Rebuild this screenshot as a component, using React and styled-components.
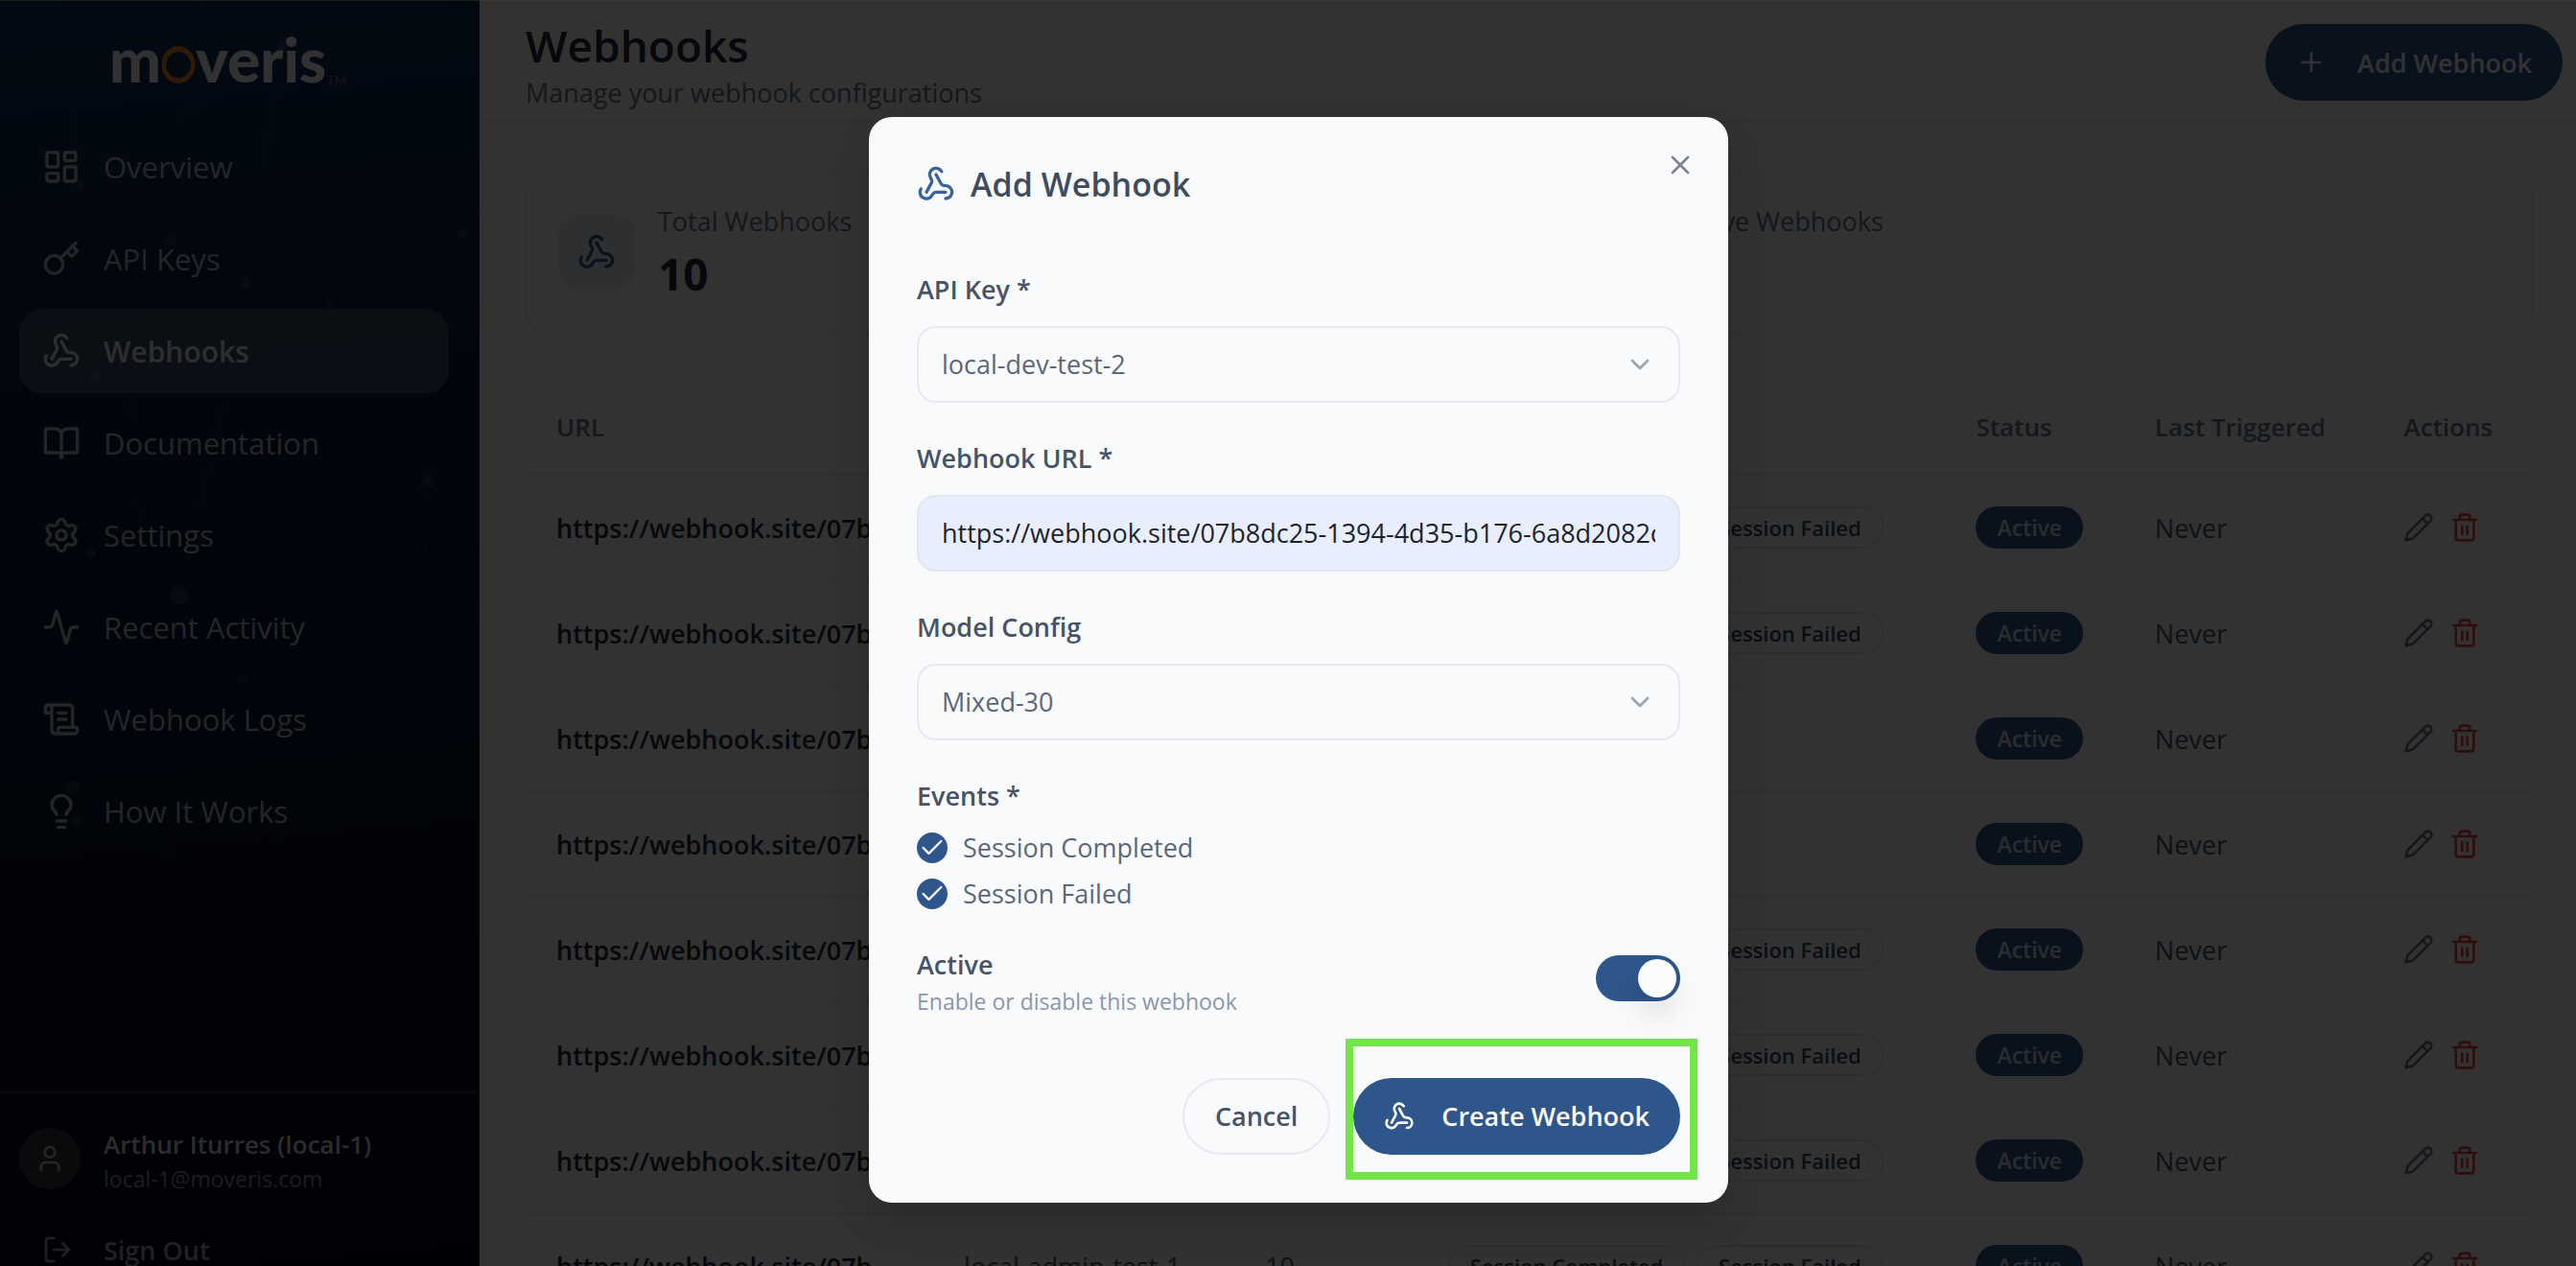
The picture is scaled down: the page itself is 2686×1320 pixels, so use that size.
import React, { useState } from 'react';
import styled, { createGlobalStyle } from "styled-components";
import {
    LayoutDashboard, Key, Webhook, BookOpen, Settings, Activity, ScrollText,
    Lightbulb, User, LogOut, Plus, Pencil, Trash2, X, ChevronDown, Check
} from "lucide-react";

const GlobalStyle = createGlobalStyle`
    * { box-sizing: border-box; }
    html, body {
        margin: 0;
        height: 100%;
        overflow: hidden;
        background: #fafafa;
    }
    body, button, input, select {
        font-family: "Open Sans", "Noto Sans", sans-serif;
        font-size: 27px;
    }
    h1, h2, p { margin: 0; }
`

const Page = styled.div`
    position: relative;
    display: flex;
    height: calc(100vh + 54px);
    background: #fafafa;
`

/* ---------- sidebar ---------- */

const Sidebar = styled.aside`
    position: relative;
    width: 500px;
    flex-shrink: 0;
    display: flex;
    flex-direction: column;
    background: linear-gradient(175deg, #0f325c 0%, #0a1c40 30%, #081734 55%, #050c1e 78%, #030818 100%);
`

const Network = styled.svg`
    position: absolute;
    inset: 0;
    width: 100%;
    height: 100%;
`

const Logo = styled.div`
    position: relative;
    height: 130px;
    flex-shrink: 0;
    padding: 0 0 6px 114px;
    display: flex;
    align-items: center;
    font-family: Lato, sans-serif;
    font-weight: 900;
    font-size: 64px;
    line-height: 72px;
    color: #f4f4f4;
`

const LogoRing = styled.svg`
    width: 36px;
    height: 42px;
    margin-top: 12px;
`

const Trademark = styled.small`
    align-self: flex-end;
    margin-bottom: 32px;
    font-weight: 400;
    font-size: 14px;
    line-height: 16px;
    color: #7a6656;
`

const Nav = styled.nav`
    position: relative;
    flex: 1;
    display: flex;
    flex-direction: column;
    gap: 8px;
    padding: 0 32px 0 20px;
`

const NavLink = styled.a`
    display: flex;
    align-items: center;
    gap: 24px;
    height: 88px;
    padding: 0 24px;
    border-radius: 24px;
    font-size: ${p => p.$active ? 30 : 31}px;
    text-decoration: none;
    font-weight: ${p => p.$active ? 600 : 400};
    color: ${p => p.$active ? "#e2e4e8" : "#b4b8c2"};
    background: ${p => p.$active ? "rgba(255, 250, 240, 0.2)" : "transparent"};
`

const SidebarFooter = styled.div`
    position: relative;
    padding: 29px 20px 31px;
    border-top: 2px solid #26282e;
`

const Profile = styled.div`
    display: flex;
    align-items: center;
    gap: 24px;
`

const Avatar = styled.div`
    display: flex;
    align-items: center;
    justify-content: center;
    width: 64px;
    height: 64px;
    border-radius: 50%;
    background: #30323a;
    color: #b4b8c2;
`

const ProfileText = styled.div`
    padding-top: 6px;
`

const ProfileName = styled.p`
    font-size: 26px;
    font-weight: 600;
    line-height: 36px;
    color: #d8dade;
`

const ProfileMail = styled.p`
    font-size: 23px;
    line-height: 36px;
    color: #8c909a;
`

const SignOut = styled.button`
    display: flex;
    align-items: center;
    gap: 32px;
    height: 80px;
    margin-top: 16px;
    padding: 0 24px;
    border: none;
    background: none;
    font-weight: 600;
    color: #a0a4ae;
`

/* ---------- main area ---------- */

const Main = styled.main`
    flex: 1;
    min-width: 0;
`

const Header = styled.header`
    display: flex;
    align-items: center;
    justify-content: space-between;
    height: 128px;
    padding: 4px 14px 0 48px;
    border-bottom: 2px solid #ebebeb;
`

const HeaderText = styled.div`
    padding-top: 4px;
`

const Title = styled.h1`
    font-size: 46px;
    line-height: 60px;
    font-weight: 600;
    color: #1f2937;
`

const Subtitle = styled.p`
    line-height: 40px;
    color: #64748b;
`

const Button = styled.button`
    display: flex;
    align-items: center;
    gap: 32px;
    height: 80px;
    padding: 0 32px;
    border: ${p => p.$outline ? "2px solid #e8e9ec" : "none"};
    border-radius: 40px;
    font-weight: 600;
    background: ${p => p.$outline ? "#f9fafc" : "#2f568a"};
    color: ${p => p.$outline ? "#475366" : "#f9fafc"};
`

const Content = styled.div`
    padding: 50px 44px 0 48px;
`

const Stats = styled.div`
    display: grid;
    grid-template-columns: 1fr 1fr;
    gap: 32px;
`

const StatCard = styled.section`
    display: flex;
    align-items: center;
    gap: 24px;
    height: 170px;
    padding: 32px;
    border: 2px solid #ebebeb;
    border-radius: 24px;
`

const StatIcon = styled.div`
    display: flex;
    align-items: center;
    justify-content: center;
    width: 80px;
    height: 80px;
    border-radius: 24px;
    background: #e4e9f0;
    color: #2f568a;
`

const StatLabel = styled.p`
    line-height: 36px;
    margin-bottom: 8px;
    color: #64748b;
`

const StatValue = styled.p`
    font-size: 46px;
    line-height: 56px;
    font-weight: 700;
    color: #1f2937;
`

const Table = styled.table`
    width: 100%;
    margin-top: 48px;
    table-layout: fixed;
    border-collapse: collapse;
    text-align: left;
`

const Col = styled.col`
    width: ${p => p.$share}%;
`

const Th = styled.th`
    height: 99px;
    padding: 0 0 0 32px;
    border-bottom: 2px solid #ebebeb;
    font-size: 26px;
    font-weight: 600;
    color: #64748b;
`

const Td = styled.td`
    height: 110px;
    padding: 0 0 0 32px;
    border-bottom: 2px solid #ebebeb;
    color: #475569;
    white-space: nowrap;
`

const UrlText = styled.div`
    width: 358px;
    overflow: hidden;
    text-overflow: ellipsis;
    font-weight: 600;
    color: #1f2937;
`

const Badges = styled.div`
    display: flex;
    gap: 12px;
`

const Badge = styled.span`
    display: inline-flex;
    align-items: center;
    height: 44px;
    padding: 0 ${p => p.$solid ? 20 : 21}px;
    border: 2px solid ${p => p.$solid ? "#2f568a" : "#e6e6e6"};
    border-radius: 22px;
    font-size: ${p => p.$solid ? 23 : 22}px;
    font-weight: 600;
    background: ${p => p.$solid ? "#2f568a" : "transparent"};
    color: ${p => p.$solid ? "#d8dce4" : "#334155"};
`

const RowActions = styled.div`
    display: flex;
    gap: 16px;
`

const IconButton = styled.button`
    display: flex;
    padding: 0;
    border: none;
    background: none;
    color: ${p => p.$danger ? "#ef4444" : "#64748b"};
`

/* ---------- dialog ---------- */

const Overlay = styled.div`
    position: absolute;
    inset: 0 -22px 0 0;
    display: flex;
    align-items: center;
    justify-content: center;
    background: rgba(0, 0, 0, 0.8);
    border-top: 1px solid rgba(90, 80, 50, 0.3);
`

const Dialog = styled.div`
    position: relative;
    width: 896px;
    padding: 50px;
    border-radius: 24px;
    background: #f9fafc;
    box-shadow: 0 20px 40px rgba(0, 0, 0, 0.15);
`

const DialogTitle = styled.h2`
    display: flex;
    align-items: center;
    gap: 16px;
    margin-bottom: 72px;
    font-size: 34px;
    line-height: 40px;
    font-weight: 600;
    color: #404b5e;

    svg { color: #3a629c; }
`

const CloseButton = styled.button`
    position: absolute;
    top: 34px;
    right: 34px;
    display: flex;
    padding: 0;
    border: none;
    background: none;
    color: #7a8494;
`

const Form = styled.form`
    display: flex;
    flex-direction: column;
    gap: 40px;
`

const Field = styled.div`
    display: flex;
    flex-direction: column;
    gap: 20px;
`

const Label = styled.label`
    line-height: 36px;
    font-weight: 600;
    color: #475366;
`

const EventGroup = styled.fieldset`
    margin: 0;
    padding: 0;
    border: none;
`

const Legend = styled.legend`
    padding: 0;
    margin-bottom: 20px;
    line-height: 36px;
    font-weight: 600;
    color: #475366;
`

const SelectBox = styled.div`
    position: relative;

    svg {
        position: absolute;
        right: 26px;
        top: 24px;
        color: #9ca4b0;
        pointer-events: none;
    }
`

const Select = styled.select`
    display: block;
    width: 100%;
    height: 80px;
    padding: 0 24px;
    appearance: none;
    border: 2px solid #e8e9ec;
    border-radius: 20px;
    background: #f9fafc;
    color: #5b677a;
`

const Input = styled.input`
    width: 100%;
    height: 80px;
    padding: 0 24px;
    border: 2px solid #e4e6ec;
    border-radius: 20px;
    background: #e8eefd;
    color: #20242a;
`

const CheckRow = styled.label`
    display: flex;
    align-items: center;
    gap: 16px;
    line-height: 32px;
    color: #5b677a;

    & + & { margin-top: 16px; }
`

const CheckMark = styled.span`
    position: relative;
    display: flex;
    align-items: center;
    justify-content: center;
    width: 32px;
    height: 32px;
    border-radius: 50%;
    background: #2f568a;
    color: #f9fafc;

    input {
        position: absolute;
        inset: 0;
        margin: 0;
        opacity: 0;
    }
`

const ActiveRow = styled.div`
    display: flex;
    justify-content: space-between;
    align-items: flex-start;
`

const ActiveText = styled.div`
    display: flex;
    flex-direction: column;
    gap: 4px;
`

const Hint = styled.p`
    font-size: 23px;
    line-height: 32px;
    color: #8a97ab;
`

const Switch = styled.input`
    appearance: none;
    display: flex;
    width: 88px;
    height: 48px;
    margin: 8px 0 0;
    padding: 4px;
    border-radius: 24px;
    background: ${p => p.checked ? "#2f568a" : "#d8dce4"};
    justify-content: ${p => p.checked ? "flex-end" : "flex-start"};

    &::before {
        content: "";
        width: 40px;
        height: 40px;
        border-radius: 50%;
        background: #fbfcfe;
        box-shadow: 0 20px 30px rgba(0, 0, 0, 0.1);
    }
`

const DialogFooter = styled.div`
    display: flex;
    justify-content: flex-end;
    gap: 24px;
    padding-top: 24px;

    button { gap: 28px; }
`

const Highlight = styled.div`
    position: relative;

    &::after {
        content: "";
        position: absolute;
        inset: -41px -18px -26px -8px;
        border: 8px solid #70e648;
        pointer-events: none;
    }
`

const navItems = [
    { label: "Overview", icon: LayoutDashboard },
    { label: "API Keys", icon: Key },
    { label: "Webhooks", icon: Webhook, active: true },
    { label: "Documentation", icon: BookOpen },
    { label: "Settings", icon: Settings },
    { label: "Recent Activity", icon: Activity },
    { label: "Webhook Logs", icon: ScrollText },
    { label: "How It Works", icon: Lightbulb },
];

const WEBHOOK_URL = "https://webhook.site/07b8dc25-1394-4d35-b176-6a8d2082c5f1";
const BOTH = ["Session Completed", "Session Failed"];
const ONE = ["Session Completed"];

const webhooks = [BOTH, BOTH, ONE, ONE, BOTH, BOTH, BOTH, BOTH].map((events, i) => ({
    id: i + 1,
    apiKey: "local-admin-test-1",
    frames: 10,
    events
}));

const columns = [
    { name: "URL", share: 20.3 },
    { name: "API Key", share: 15 },
    { name: "Frames", share: 9.1 },
    { name: "Events", share: 26.3 },
    { name: "Status", share: 8.9 },
    { name: "Last Triggered", share: 12.4 },
    { name: "Actions", share: 8 },
];

const dots = [
    [295, 49, 6], [83, 192, 5], [178, 251, 6], [256, 294, 6], [482, 243, 5],
    [344, 318, 3], [99, 394, 5], [446, 501, 6], [94, 576, 5], [187, 621, 10],
    [253, 708, 5], [76, 821, 7], [80, 857, 6],
];

const links = [
    "M205 0L295 49L188 120", "M83 192L0 226", "M60 0L83 192L178 251L256 294L500 218",
    "M295 49L256 294L230 440", "M83 192L140 440", "M446 501L500 560",
    "M0 574L187 621L0 696", "M187 621L140 520", "M187 621L230 430", "M446 501L350 790L310 860",
    "M187 621L290 880", "M0 800L187 621", "M446 501L436 860", "M446 501L320 650",
    "M280 690L500 640", "M94 576L90 690", "M80 857L180 890",
];

const App = () => {
    const [form, setForm] = useState({
        apiKey: "local-dev-test-2",
        url: WEBHOOK_URL,
        model: "Mixed-30",
        completed: true,
        failed: true,
        active: true
    });

    const handleField = (e) => {
        const { name, type, value, checked } = e.target;
        setForm({
            ...form,
            [name]: type === "checkbox" ? checked : value
        })
    }

    return (
        <>
        <GlobalStyle />
        <Page>
            <Sidebar>
                <Network aria-hidden="true">
                    {links.map(d => <path key={d} d={d} fill="none" stroke="#fff" strokeOpacity="0.03" strokeWidth="2" />)}
                    {dots.map(([x, y, r]) => <circle key={x} cx={x} cy={y} r={r} fill="#d8c8b8" fillOpacity="0.13" />)}
                </Network>
                <Logo>
                    m
                    <LogoRing viewBox="0 0 36 42" aria-hidden="true">
                        <path
                            fillRule="evenodd"
                            fill="#e8821a"
                            d="M18 1a17.500 19.500 0 1 1 0 39a17.500 19.500 0 1 1 0-39zM18 7a13 13.500 0 1 0 0 27a13 13.500 0 1 0 0-27z"
                        />
                    </LogoRing>
                    veris
                    <Trademark>TM</Trademark>
                </Logo>
                <Nav>
                    {navItems.map(({ label, icon: Icon, active }) => (
                        <NavLink key={label} href="#" $active={active}>
                            <Icon size={40} />
                            {label}
                        </NavLink>
                    ))}
                </Nav>
                <SidebarFooter>
                    <Profile>
                        <Avatar><User size={32} /></Avatar>
                        <ProfileText>
                            <ProfileName>Arthur Iturres (local-1)</ProfileName>
                            <ProfileMail>local-1@moveris.com</ProfileMail>
                        </ProfileText>
                    </Profile>
                    <SignOut type="button">
                        <LogOut size={32} />
                        Sign Out
                    </SignOut>
                </SidebarFooter>
            </Sidebar>

            <Main>
                <Header>
                    <HeaderText>
                        <Title>Webhooks</Title>
                        <Subtitle>Manage your webhook configurations</Subtitle>
                    </HeaderText>
                    <Button type="button">
                        <Plus size={32} />
                        Add Webhook
                    </Button>
                </Header>
                <Content>
                    <Stats>
                        {["Total Webhooks", "Active Webhooks"].map(label => (
                            <StatCard key={label}>
                                <StatIcon><Webhook size={40} /></StatIcon>
                                <div>
                                    <StatLabel>{label}</StatLabel>
                                    <StatValue>10</StatValue>
                                </div>
                            </StatCard>
                        ))}
                    </Stats>
                    <Table>
                        <colgroup>
                            {columns.map(c => <Col key={c.name} $share={c.share} />)}
                        </colgroup>
                        <thead>
                            <tr>
                                {columns.map(c => <Th key={c.name}>{c.name}</Th>)}
                            </tr>
                        </thead>
                        <tbody>
                            {webhooks.map(hook => (
                                <tr key={hook.id}>
                                    <Td><UrlText>{WEBHOOK_URL}</UrlText></Td>
                                    <Td>{hook.apiKey}</Td>
                                    <Td>{hook.frames}</Td>
                                    <Td>
                                        <Badges>
                                            {hook.events.map(name => <Badge key={name}>{name}</Badge>)}
                                        </Badges>
                                    </Td>
                                    <Td><Badge $solid>Active</Badge></Td>
                                    <Td>Never</Td>
                                    <Td>
                                        <RowActions>
                                            <IconButton type="button" aria-label="Edit"><Pencil size={32} /></IconButton>
                                            <IconButton type="button" aria-label="Delete" $danger><Trash2 size={32} /></IconButton>
                                        </RowActions>
                                    </Td>
                                </tr>
                            ))}
                        </tbody>
                    </Table>
                </Content>
            </Main>

            <Overlay>
                <Dialog role="dialog" aria-labelledby="dialog-title">
                    <DialogTitle id="dialog-title">
                        <Webhook size={40} />
                        Add Webhook
                    </DialogTitle>
                    <CloseButton type="button" aria-label="Close"><X size={32} /></CloseButton>

                    <Form onSubmit={e => e.preventDefault()}>
                        <Field>
                            <Label htmlFor="apiKey">API Key *</Label>
                            <SelectBox>
                                <Select id="apiKey" name="apiKey" value={form.apiKey} onChange={handleField}>
                                    <option>local-dev-test-2</option>
                                    <option>local-admin-test-1</option>
                                </Select>
                                <ChevronDown size={32} />
                            </SelectBox>
                        </Field>
                        <Field>
                            <Label htmlFor="url">Webhook URL *</Label>
                            <Input id="url" name="url" value={form.url} onChange={handleField} />
                        </Field>
                        <Field>
                            <Label htmlFor="model">Model Config</Label>
                            <SelectBox>
                                <Select id="model" name="model" value={form.model} onChange={handleField}>
                                    <option>Mixed-30</option>
                                </Select>
                                <ChevronDown size={32} />
                            </SelectBox>
                        </Field>
                        <EventGroup>
                            <Legend>Events *</Legend>
                            <CheckRow>
                                <CheckMark>
                                    <input type="checkbox" name="completed" checked={form.completed} onChange={handleField} />
                                    {form.completed && <Check size={28} />}
                                </CheckMark>
                                Session Completed
                            </CheckRow>
                            <CheckRow>
                                <CheckMark>
                                    <input type="checkbox" name="failed" checked={form.failed} onChange={handleField} />
                                    {form.failed && <Check size={28} />}
                                </CheckMark>
                                Session Failed
                            </CheckRow>
                        </EventGroup>
                        <ActiveRow>
                            <ActiveText>
                                <Label htmlFor="active">Active</Label>
                                <Hint>Enable or disable this webhook</Hint>
                            </ActiveText>
                            <Switch id="active" type="checkbox" role="switch" name="active" checked={form.active} onChange={handleField} />
                        </ActiveRow>
                        <DialogFooter>
                            <Button type="button" $outline>Cancel</Button>
                            <Highlight>
                                <Button type="submit">
                                    <Webhook size={32} />
                                    Create Webhook
                                </Button>
                            </Highlight>
                        </DialogFooter>
                    </Form>
                </Dialog>
            </Overlay>
        </Page>
        </>
    )
}

export default App
